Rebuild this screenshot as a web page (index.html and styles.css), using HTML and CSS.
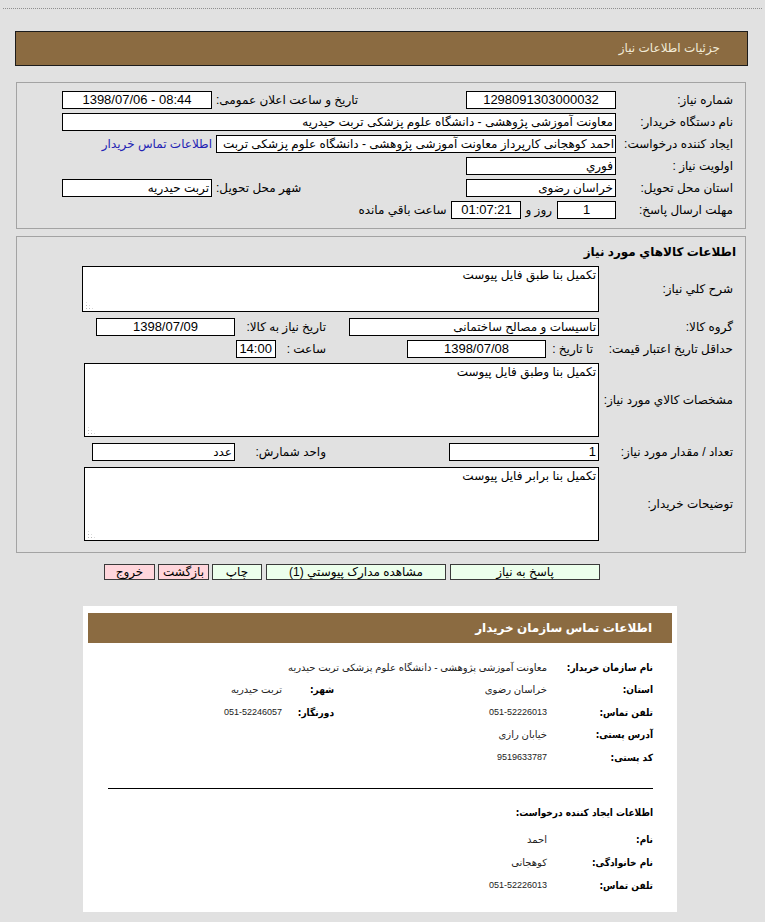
FILE: index.html
```html
<!DOCTYPE html>
<html lang="fa">
<head>
<meta charset="utf-8">
<title>جزئیات اطلاعات نیاز</title>
<link rel="stylesheet" href="styles.css">
</head>
<body>
<div class="topline"></div>
<div class="titlebar">جزئیات اطلاعات نیاز</div>

<div class="box box1">
  <div class="lbl">شماره نیاز:</div>
  <div class="fld c num">1298091303000032</div>
  <div class="lbl2">تاریخ و ساعت اعلان عمومی:</div>
  <div class="fld c num ltr">1398/07/06 - 08:44</div>

  <div class="lbl">نام دستگاه خریدار:</div>
  <div class="fld span3">معاونت آموزشی پژوهشی - دانشگاه علوم پزشکی تربت حیدریه</div>

  <div class="lbl">ایجاد کننده درخواست:</div>
  <div class="span3 inline">
    <div class="fld w400">احمد کوهجانی کارپرداز معاونت آموزشی پژوهشی - دانشگاه علوم پزشکی تربت</div>
    <span class="link">اطلاعات تماس خریدار</span>
  </div>

  <div class="lbl">اولویت نیاز :</div>
  <div class="fld">فوري</div>
  <div></div>
  <div></div>

  <div class="lbl">استان محل تحویل:</div>
  <div class="fld">خراسان رضوی</div>
  <div class="lbl2">شهر محل تحویل:</div>
  <div class="fld">تربت حیدریه</div>

  <div class="lbl">مهلت ارسال پاسخ:</div>
  <div class="span3 inline">
    <div class="fld c num w58">1</div>
    <span class="txt-day">روز و</span>
    <div class="fld c num w70">01:07:21</div>
    <span class="txt-left">ساعت باقي مانده</span>
  </div>
</div>

<div class="box box2">
  <div class="sec-title">اطلاعات کالاهاي مورد نیاز</div>

  <div class="frow">
    <div class="lbl">شرح کلي نیاز:</div>
    <div class="ta ta1">تکمیل بنا طبق فایل پیوست<span class="grip"></span></div>
  </div>

  <div class="frow gap4">
    <div class="lbl">گروه کالا:</div>
    <div class="sub">
      <div class="fld w250">تاسیسات و مصالح ساختمانی</div>
      <div class="lbl3">تاریخ نیاز به کالا:</div>
      <div class="fld c num w139">1398/07/09</div>
    </div>
  </div>

  <div class="frow gap5">
    <div class="lbl">حداقل تاریخ اعتبار قیمت:</div>
    <div class="sub">
      <div class="inline">
        <span class="to-date">تا تاریخ :</span>
        <div class="fld c num w139">1398/07/08</div>
      </div>
      <div class="inline span2">
        <span class="lbl3 hour">ساعت :</span>
        <div class="fld c num w40">14:00</div>
      </div>
    </div>
  </div>

  <div class="frow">
    <div class="lbl">مشخصات کالاي مورد نیاز:</div>
    <div class="ta ta2">تکمیل بنا وطبق فایل پیوست<span class="grip"></span></div>
  </div>

  <div class="frow">
    <div class="lbl">تعداد / مقدار مورد نیاز:</div>
    <div class="sub">
      <div class="fld num w150">1</div>
      <div class="lbl3">واحد شمارش:</div>
      <div class="fld w143">عدد</div>
    </div>
  </div>

  <div class="frow last">
    <div class="lbl">توضیحات خریدار:</div>
    <div class="ta ta2">تکمیل بنا برابر فایل پیوست<span class="grip"></span></div>
  </div>
</div>

<div class="btns">
  <span class="btn green b-reply">پاسخ به نیاز</span>
  <span class="btn green b-docs">مشاهده مدارک پیوستي <span class="num">(1)</span></span>
  <span class="btn green b-print">چاپ</span>
  <span class="btn pink b-back">بازگشت</span>
  <span class="btn pink b-exit">خروج</span>
</div>

<div class="card">
  <div class="card-head">اطلاعات تماس سازمان خریدار</div>
  <div class="card-body">
    <div class="info">
      <div class="k">نام سازمان خریدار:</div>
      <div class="v span3">معاونت آموزشی پژوهشی - دانشگاه علوم پزشکی تربت حیدریه</div>

      <div class="k">استان:</div>
      <div class="v">خراسان رضوی</div>
      <div class="k">شهر:</div>
      <div class="v v2">تربت حیدریه</div>

      <div class="k">تلفن تماس:</div>
      <div class="v num-s">051-52226013</div>
      <div class="k">دورنگار:</div>
      <div class="v v2 num-s">051-52246057</div>

      <div class="k">آدرس پستی:</div>
      <div class="v span3">خیابان رازی</div>

      <div class="k">کد پستی:</div>
      <div class="v span3 num-s">9519633787</div>
    </div>

    <div class="rule"></div>

    <div class="sub-title">اطلاعات ایجاد کننده درخواست:</div>

    <div class="info info2">
      <div class="k">نام:</div>
      <div class="v span3">احمد</div>

      <div class="k">نام خانوادگی:</div>
      <div class="v span3">کوهجانی</div>

      <div class="k">تلفن تماس:</div>
      <div class="v span3 num-s">051-52226013</div>
    </div>
  </div>
</div>
</body>
</html>
```

FILE: styles.css
```css
* {
  box-sizing: border-box;
}

html, body {
  margin: 0;
  padding: 0;
}

body {
  background: #e1e1e1;
  font-family: "Liberation Sans", "DejaVu Sans", sans-serif;
  font-size: 12px;
  color: #000;
  overflow: hidden;
}

.topline {
  margin: 8px 3px 0 3px;
  border-top: 1px dotted #8f8f8f;
}

.titlebar {
  margin: 22px 0 0 15px;
  width: 733px;
  height: 35px;
  background: #8b6b41;
  border: 1px solid #1c1c1c;
  color: #f1ead6;
  direction: rtl;
  padding-right: 27px;
  line-height: 33px;
  font-size: 12px;
}

.box {
  margin-left: 16px;
  width: 730px;
  border: 1px solid #a3a3a3;
  direction: rtl;
}

.box1 {
  margin-top: 16px;
  padding: 6px 12px 7px 0;
  display: grid;
  grid-template-columns: 117px 150px 254px 150px;
  grid-auto-rows: 22px;
  align-items: center;
}

.lbl {
  white-space: nowrap;
  text-align: right;
}

.lbl2 {
  text-align: left;
  padding-left: 4px;
  white-space: nowrap;
}

.fld {
  height: 18px;
  background: #fff;
  border: 1px solid #000;
  padding: 0 2px;
  line-height: 16px;
  white-space: nowrap;
  overflow: hidden;
}

.c {
  text-align: center;
}

.ltr {
  direction: ltr;
}

.num {
  font-size: 13px;
}

.span3 {
  grid-column: span 3;
}

.span2 {
  grid-column: span 2;
}

.inline {
  display: flex;
  align-items: center;
}

.w400 { width: 400px; flex: none; padding: 0 1px; }
.w58 { width: 59px; flex: none; }
.w70 { width: 70px; flex: none; }
.w250 { width: 250px; }
.w139 { width: 139px; flex: none; }
.w150 { width: 150px; }
.w143 { width: 143px; }
.w40 { width: 40px; flex: none; }

.link {
  color: #2323b4;
  margin-right: 4px;
  white-space: nowrap;
}

.txt-day {
  margin: 0 5px 0 4px;
  white-space: nowrap;
}

.txt-left {
  margin-right: 5px;
  white-space: nowrap;
}

/* box 2 */
.box2 {
  margin-top: 7px;
  padding: 7px 12px 11px 65px;
}

.sec-title {
  font-weight: bold;
  height: 16px;
  line-height: 16px;
  margin: 0 -3px 6px 0;
}

.frow {
  display: grid;
  grid-template-columns: 134px 517px;
  align-items: center;
  margin-bottom: 6px;
}

.frow.gap4 { margin-bottom: 4px; }
.frow.gap5 { margin-bottom: 5px; }
.frow.last { margin-bottom: 0; }

.ta {
  position: relative;
  background: #fff;
  border: 1px solid #000;
  padding: 1px 2px;
  line-height: 15px;
}

.ta1 {
  width: 517px;
  height: 46px;
}

.ta2 {
  width: 515px;
  height: 74px;
}

.grip {
  position: absolute;
  left: 2px;
  bottom: 2px;
  width: 8px;
  height: 8px;
  background-image: radial-gradient(circle, #b8b8b8 0.6px, transparent 0.9px);
  background-size: 3px 3px;
  clip-path: polygon(0 0, 100% 100%, 0 100%);
}

.sub {
  display: grid;
  grid-template-columns: 250px 114px 1fr;
  align-items: center;
}

.lbl3 {
  text-align: right;
  padding-right: 23px;
  white-space: nowrap;
}

.to-date {
  width: 53px;
  flex: none;
  padding-right: 6px;
  white-space: nowrap;
}

.hour {
  margin-left: 11px;
}

/* buttons */
.btns {
  margin: 11px 0 0 16px;
  width: 730px;
  direction: rtl;
  padding-right: 146px;
  display: flex;
  height: 16px;
}

.btn {
  height: 16px;
  border: 1px solid #3a3a3a;
  line-height: 14px;
  text-align: center;
  white-space: nowrap;
  flex: none;
}

.btn .num {
  font-size: 12px;
}

.green { background: #ecffec; }
.pink { background: #ffd6dc; }

.b-reply { width: 150px; }
.b-docs { width: 180px; margin-right: 4px; }
.b-print { width: 50px; margin-right: 4px; }
.b-back { width: 51px; margin-right: 3px; }
.b-exit { width: 51px; margin-right: 3px; }

/* card */
.card {
  margin: 26px 0 0 83px;
  width: 594px;
  height: 306px;
  background: #fff;
  padding: 7px 5px;
  direction: rtl;
}

.card-head {
  height: 30px;
  background: #8b6b41;
  color: #fff;
  font-weight: bold;
  font-size: 12px;
  line-height: 30px;
  padding-right: 20px;
}

.card-body {
  padding: 13px 19px 0 20px;
  font-size: 10px;
}

.info {
  display: grid;
  grid-template-columns: 106px 213px 50px 1fr;
  grid-auto-rows: 22.5px;
  align-items: center;
}

.info2 {
  grid-auto-rows: 23px;
  margin-top: 7px;
}

.k {
  font-family: "DejaVu Sans Condensed", "DejaVu Sans", sans-serif;
  font-stretch: condensed;
  font-weight: bold;
  font-size: 10px;
  white-space: nowrap;
}

.v {
  white-space: nowrap;
  color: #222;
}

.v2 {
  padding-right: 2px;
}

.num-s {
  font-size: 9px;
}

.rule {
  margin-top: 19px;
  border-top: 1px solid #000;
}

.sub-title {
  margin-top: 16px;
  height: 16px;
  line-height: 16px;
  font-family: "DejaVu Sans Condensed", "DejaVu Sans", sans-serif;
  font-stretch: condensed;
  font-weight: bold;
  font-size: 10px;
}
```
